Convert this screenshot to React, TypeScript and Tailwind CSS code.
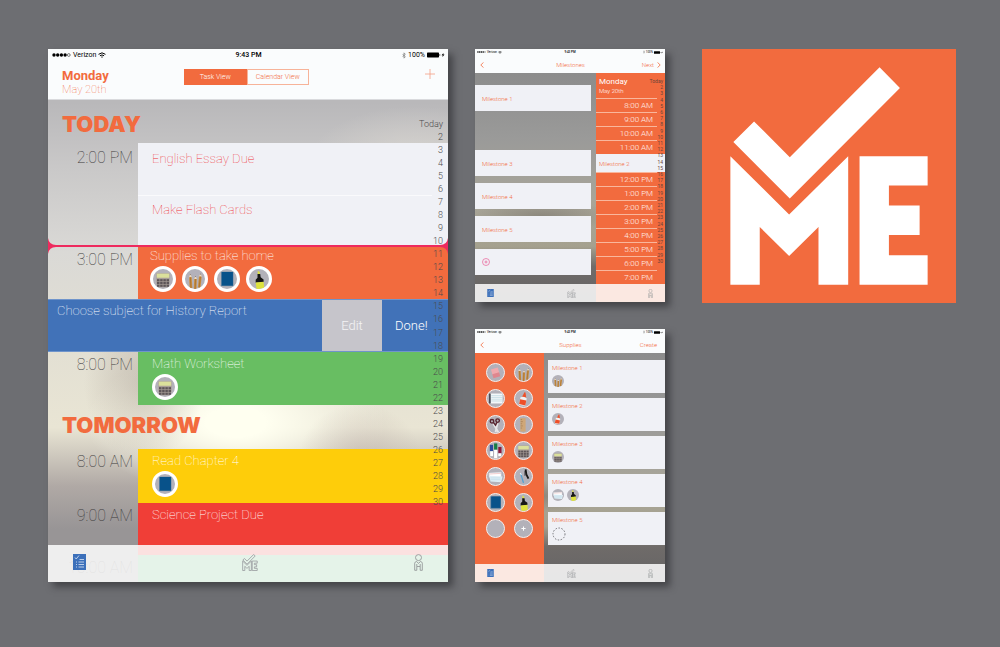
import React from "react";

type SupplyKind =
  | "calculator" | "pencils" | "book" | "highlighter" | "eraser" | "paper" | "glue"
  | "scissors" | "ruler" | "markers" | "cards" | "pens" | "blank" | "add";

const CHECK = "M156 217L263 324L532 55L593 117L263 448L94 279Z";
const MARK_LEFT = "M85 321L261 496L438 321V706H349V533L261 620L173 533V706H85Z";
const MARK_RIGHT = "M472 321H676V409H560V469H652V557H560V618H676V706H472Z";

function Logo() {
  return (
    <svg viewBox="0 0 761 761" className="block w-full bg-[#f26b3e]" role="img" aria-label="Check ME logo">
      <g fill="#fff">
        <path d={CHECK} />
        <path d={MARK_LEFT} />
        <path d={MARK_RIGHT} />
      </g>
    </svg>
  );
}

function SupplyArt({ kind }: { kind: SupplyKind }) {
  switch (kind) {
    case "calculator":
      return (
        <g>
          <path d="M4 5h16v13l-3 4H7l-3-4z" fill="#a99f98" />
          <rect x="4.500" y="5.500" width="15" height="5" fill="#dbe09b" />
          {[12.2, 15.5, 18.8].map((y) =>
            [4.8, 8.6, 12.4, 16.2].map((x) => (
              <rect key={`${x}-${y}`} x={x} y={y} width="3" height="2.600" fill="#5d5558" />
            )),
          )}
        </g>
      );
    case "pencils":
      return (
        <g>
          {[[5, 6, -3], [11, 8, 2], [16.5, 5, 6]].map(([x, y, r]) => (
            <g key={x} transform={`rotate(${r} ${x} 12)`}>
              <path d={`M${x} ${y + 4}l1.6 -4l1.6 4z`} fill="#f1d9b8" />
              <path d={`M${x + 1.1} ${y + 1.4}l.5 -1.4l.5 1.4z`} fill="#4a4038" />
              <rect x={x} y={y + 4} width="3.2" height="13" fill="#c98f43" />
              <rect x={x + 1.1} y={y + 4} width="1" height="13" fill="#a97432" />
            </g>
          ))}
        </g>
      );
    case "book":
      return (
        <g>
          <rect x="5" y="3.500" width="14.500" height="17" fill="#3a6f96" />
          <rect x="6" y="3.500" width="13" height="16" fill="#08528a" />
        </g>
      );
    case "highlighter":
      return (
        <g>
          <path d="M10.5 2l2.5 1.5v3h-2.500z" fill="#dde23e" />
          <path d="M10.200 6h3.300l.5 4l3.500 2.500v3l-9.500 1v-3.500l2.200-2.500z" fill="#161616" />
          <path d="M8 16.200l9.500-1l.8 8.500l-9.300.5z" fill="#dde23e" />
        </g>
      );
    case "eraser":
      return (
        <g transform="rotate(-16 12 12)">
          <rect x="7" y="6" width="10" height="8" fill="#f0a9ad" />
          <rect x="7" y="13" width="10" height="6" fill="#df868e" />
        </g>
      );
    case "paper":
      return (
        <g>
          <rect x="4" y="5" width="18" height="14" fill="#f4f8fa" />
          <path d="M6 8h16M6 10.500h16M6 13h16M6 15.500h16" stroke="#abcbd8" strokeWidth=".8" />
          <rect x="3" y="5" width="2.200" height="14" fill="#3b3f48" />
        </g>
      );
    case "glue":
      return (
        <g transform="rotate(12 12 12)">
          <path d="M11.500 3h1.500l2.500 7h-6z" fill="#ee4f28" />
          <path d="M7.500 11q5-3 9 0v11h-9z" fill="#f3f1f1" />
          <path d="M7.500 14h9v7h-9z" fill="#ee4f28" />
        </g>
      );
    case "scissors":
      return (
        <g>
          <path d="M9 11l7 12M15 10l-3 13" stroke="#e7e6e8" strokeWidth="2.600" />
          <circle cx="7" cy="7.500" r="2.500" fill="none" stroke="#59242f" strokeWidth="2" />
          <circle cx="15" cy="6.500" r="2.500" fill="none" stroke="#59242f" strokeWidth="2" />
          <path d="M9 9l3 4l2-4" fill="none" stroke="#59242f" strokeWidth="2" />
        </g>
      );
    case "ruler":
      return (
        <g>
          <rect x="7.500" y="3" width="7.500" height="19" fill="#cfa778" />
          <path d="M8 5h2M8 8h3M8 11h2M8 14h3M8 17h2" stroke="#8e6a42" strokeWidth=".7" />
        </g>
      );
    case "markers":
      return (
        <g>
          <rect x="4" y="4" width="4.500" height="9" fill="#2a4a9f" />
          <rect x="4.500" y="13" width="4" height="7" fill="#fff" />
          <rect x="10" y="2" width="4.500" height="9" fill="#167d45" />
          <rect x="10" y="11" width="4.500" height="12" fill="#fff" />
          <rect x="16" y="7" width="4.500" height="9" fill="#8d1739" />
          <rect x="16" y="16" width="4" height="4" fill="#fff" />
        </g>
      );
    case "cards":
      return (
        <g>
          <path d="M3 7l17-1v7H3z" fill="#fff" stroke="#cfd8df" strokeWidth=".6" />
          <path d="M3 11l19 1l-2 8l-15-1z" fill="#ddeef6" />
          <path d="M5 14h14M5 16.500h14" stroke="#b4d3e3" strokeWidth=".7" />
          <path d="M4 8.500l16-1" stroke="#e28c8c" strokeWidth=".6" />
        </g>
      );
    case "pens":
      return (
        <g>
          <path d="M8 8l4 13" stroke="#4e9fd2" strokeWidth="1.800" />
          <path d="M7.500 7l1.500 3" stroke="#e8f2f8" strokeWidth="1.600" />
          <path d="M15 2l1 7l3 6" fill="none" stroke="#191919" strokeWidth="2.600" />
          <path d="M14 4v7" stroke="#191919" strokeWidth="1" />
        </g>
      );
    case "add":
      return <path d="M12 9v6M9 12h6" stroke="#fff" strokeWidth="1.500" />;
    default:
      return null;
  }
}

function Supply({ kind, className }: { kind: SupplyKind; className: string }) {
  return (
    <span className={`block shrink-0 overflow-hidden rounded-full bg-[#b3b1b9] ${className}`}>
      <svg viewBox="0 0 24 24" className="block size-full" aria-hidden="true">
        <SupplyArt kind={kind} />
      </svg>
    </span>
  );
}

function StatusBar({ small = false }: { small?: boolean }) {
  return (
    <div className={`grid grid-cols-3 items-center font-medium text-black ${small ? "h-[6px] px-[2px] text-[3px] leading-[4px]" : "h-3 pl-1 pr-[3px] text-[7px] leading-[8px]"}`}>
      <div className={`flex items-center ${small ? "gap-[1px]" : "gap-[2px]"}`}>
        <svg viewBox="0 0 19 4" className={small ? "h-[2px] w-[9px]" : "h-1 w-[19px]"} aria-hidden="true">
          {[2, 5.7, 9.400, 13.100].map((x) => <circle key={x} cx={x} cy="2" r="1.700" />)}
          <circle cx="16.800" cy="2" r="1.400" fill="none" stroke="#000" strokeWidth=".5" />
        </svg>
        <span className="font-normal">Verizon</span>
        <svg viewBox="0 0 12 9" className={small ? "h-[3px] w-1" : "h-[6px] w-2"} fill="none" stroke="#000" strokeWidth="1.500" aria-hidden="true">
          <path d="M.8 3.500Q6-1 11.200 3.500M2.900 5.700Q6 3 9.100 5.700M5 7.700L6 7l1 .7" />
        </svg>
      </div>
      <span className="text-center">9:43 PM</span>
      <div className={`flex items-center justify-end ${small ? "gap-[1px]" : "gap-[2px]"}`}>
        <svg viewBox="0 0 6 10" className={small ? "h-1 w-[2px]" : "h-[7px] w-1"} fill="none" stroke="#666" strokeWidth=".9" aria-hidden="true">
          <path d="M1 3l4 4l-2 2V1l2 2l-4 4" />
        </svg>
        <span className="font-normal">100%</span>
        <svg viewBox="0 0 18 6" className={small ? "h-[3px] w-[9px]" : "h-[6px] w-[18px]"} aria-hidden="true">
          <rect x="0" y=".5" width="12" height="5" rx=".7" />
          <path d="M12.500 2v2l1-1zM16.500 1l-2 2.300h1.200L15.500 5l2-2.400h-1.200z" />
        </svg>
      </div>
    </div>
  );
}

function TabBar({ small = false }: { small?: boolean }) {
  return (
    <nav
      aria-label="Main"
      className={`absolute inset-x-0 bottom-0 flex items-center justify-between bg-[#fdfdfd]/86 ${small ? "h-[18px] px-3" : "h-[37px] px-[25px] pb-[3px]"}`}
    >
      <a href="#tasks" aria-label="Tasks">
        <svg viewBox="0 0 13 16" className={small ? "h-2 w-[7px]" : "h-4 w-[13px]"} aria-hidden="true">
          <rect width="13" height="16" fill="#3c70ba" />
          <path d="M2 3.500l1.200 1.500l2.800-3.500M6.500 5.500h4.500M3 8h1M5.500 8h5.500M3 10.500h1M5.500 10.500h5.500M3 13h1M5.500 13h5.500" fill="none" stroke="#dce6f5" strokeWidth=".8" />
        </svg>
      </a>
      <a href="#home" aria-label="Home">
        <svg viewBox="70 35 626 690" className={small ? "h-[9px] w-[9px]" : "h-[17px] w-4"} fill="none" stroke="#9a9da0" strokeWidth="34" aria-hidden="true">
          <path d={CHECK} />
          <path d={MARK_LEFT} />
          <path d={MARK_RIGHT} />
        </svg>
      </a>
      <a href="#profile" aria-label="Profile">
        <svg viewBox="0 0 9 17" className={small ? "h-[9px] w-[5px]" : "h-[17px] w-[9px]"} fill="none" stroke="#95989a" strokeWidth=".9" aria-hidden="true">
          <circle cx="4.500" cy="3.600" r="3" />
          <path d="M.7 16.300V9.200Q1 7.500 2.700 7.500L4.500 9.500L6.300 7.500Q8 7.500 8.300 9.200V16.300H6.200V12.500H2.800V16.300ZM2.800 12.500V10M6.200 12.500V10" />
        </svg>
      </a>
    </nav>
  );
}

function DayIndex({ className }: { className: string }) {
  return (
    <ol className={`pointer-events-none absolute flex flex-col justify-between text-right ${className}`}>
      <li>Today</li>
      {Array.from({ length: 29 }, (_, i) => <li key={i}>{i + 2}</li>)}
    </ol>
  );
}

const tile = "flex flex-col items-start gap-[2px] text-[13px] leading-4";
const slot = "pr-[5px] text-right text-[16px] leading-5 text-[#3d3b3c] font-thin";

function TaskRow({ time, title, height, color, supplies = [], inset = "pl-[14px] pt-1" }: {
  time: string; title: string; height: string; color: string; supplies?: SupplyKind[]; inset?: string;
}) {
  return (
    <li className={`grid grid-cols-[90px_1fr] ${height}`}>
      <time className={`${slot} pt-[3px]`}>{time}</time>
      <div className={`${tile} ${inset} text-white ${color}`}>
        <span>{title}</span>
        {supplies.length > 0 && (
          <div className="flex gap-[6px]">
            {supplies.map((kind) => (
              <Supply key={kind} kind={kind} className="size-[26px] border-[3px] border-white" />
            ))}
          </div>
        )}
      </div>
    </li>
  );
}

const heading = "pl-[14px] font-[Inter] text-[22px] leading-6 font-black text-[#f26b3e]";
const shell = "relative overflow-hidden";
const shadow = "shadow-[5px_5px_7px_rgba(35,35,38,0.55)]";

function Flare({ className }: { className: string }) {
  return (
    <svg viewBox="0 0 8 16" className={`absolute -top-[7px] h-4 w-2 ${className}`} fill="#ee2a5e" aria-hidden="true">
      <path d="M0 0Q1 7 8 7V9Q1 9 0 16Z" />
    </svg>
  );
}

function TaskBoard() {
  return (
    <section className={shadow}>
      <div className={`${shell} bg-[radial-gradient(ellipse_110px_60px_at_92%_22%,#d8d5d0_0%,transparent_100%),radial-gradient(ellipse_60px_75px_at_24%_63%,#a69b9077_0%,transparent_100%),radial-gradient(ellipse_60px_50px_at_78%_76%,#c5b9b099_0%,transparent_100%),radial-gradient(ellipse_150px_75px_at_47%_70%,#fffff0_20%,#fffff000_100%),linear-gradient(180deg,#b9b8ba_10%,#c9c8c8_22%,#dad9d6_38%,#e2dfd3_55%,#e9e5d4_71%,#b0a9a5_82%,#989596_90%,#989596_100%)]`}>
        <header className="bg-[#fafcfd]">
          <StatusBar />
          <div className="grid h-[39px] grid-cols-[122fr_125fr_126fr] items-start border-b border-[#d9dadd] pl-[14px] pr-[13px] pt-2">
            <div className="text-[#f26b3e]">
              <h1 className="text-[13px] leading-[14px] font-bold">Monday</h1>
              <p className="text-[11px] leading-[13px]">May 20th</p>
            </div>
            <div className="grid grid-cols-2 text-[7px] leading-[14px] font-light">
              <button className="border border-[#f26b3e] bg-[#f26b3e] text-white">Task View</button>
              <button className="border border-[#f7b399] text-[#f26b3e]">Calendar View</button>
            </div>
            <button aria-label="Add task" className="justify-self-end">
              <svg viewBox="0 0 10 10" className="size-[10px]" stroke="#f4a084" strokeWidth=".8" aria-hidden="true">
                <path d="M5 0v10M0 5h10" />
              </svg>
            </button>
          </div>
        </header>

        <h2 className={`${heading} h-[43px] pt-3`}>TODAY</h2>
        <ul>
          <li className="grid grid-cols-[90px_1fr]">
            <time className={`${slot} pt-[5px]`}>2:00 PM</time>
            <div className="bg-[#f0f1f6] text-[#ee3338]">
              <div className={`${tile} h-[52px] pl-[14px] pt-2`}>English Essay Due</div>
              <div className="mr-4 border-t border-[#fafafc]" />
              <div className={`${tile} h-[49px] pl-[14px] pt-[6px]`}>Make Flash Cards</div>
            </div>
          </li>
        </ul>
        <div className="relative h-[2px] bg-[#ee2a5e]">
          <Flare className="left-0" />
          <Flare className="right-0 -scale-x-100" />
        </div>
        <ul>
          <TaskRow time="3:00 PM" title="Supplies to take home" height="h-[52px]" color="bg-[#f26b3e]" inset="pl-3 pt-px" supplies={["calculator", "pencils", "book", "highlighter"]} />
          <li className="flex h-[53px] border-y border-[#6f94cb] bg-[#4172b8] text-[13px] leading-4 text-white">
            <span className="flex-1 pl-[9px] pt-[3px]">Choose subject for History Report</span>
            <button className="w-[60px] bg-[#c6c5cb] font-light text-white/80">Edit</button>
            <button className="w-[66px] pl-[13px] text-left font-light text-white">Done!</button>
          </li>
          <TaskRow time="8:00 PM" title="Math Worksheet" height="h-[53px]" color="bg-[#68be62]" supplies={["calculator"]} />
        </ul>
        <h2 className={`${heading} h-11 pt-2`}>TOMORROW</h2>
        <ul>
          <TaskRow time="8:00 AM" title="Read Chapter 4" height="h-[54px]" color="bg-[#fecd0a]" supplies={["book"]} />
          <TaskRow time="9:00 AM" title="Science Project Due" height="h-[52px]" color="bg-[#f03e37]" />
          <TaskRow time="10:00 AM" title="" height="h-[27px]" color="bg-[#54b673]" />
        </ul>

        <DayIndex className="right-[5px] top-[69px] h-[391px] text-[9px] leading-[13px] font-light text-[#4b4a4c]" />
        <TabBar />
      </div>
    </section>
  );
}

const smallBackdrop =
  "bg-[radial-gradient(ellipse_70px_16px_at_35%_66%,#75706888_0%,transparent_100%),linear-gradient(180deg,#8b8b8b_8%,#9a9a99_35%,#a8a599_60%,#a5a18f_78%,#6f6b69_86%,#656465_100%)]";

function SmallHeader({ title, action, next = false }: { title: string; action: string; next?: boolean }) {
  return (
    <header className="bg-[#fafcfd]">
      <StatusBar small />
      <div className="grid h-[18px] grid-cols-3 items-center pl-[5px] pr-1 pt-px text-[6px] leading-[7px] font-light text-[#f26b3e]">
        <button aria-label="Back" className="justify-self-start">
          <svg viewBox="0 0 4 6" className="h-[6px] w-1" fill="none" stroke="#f26b3e" strokeWidth=".8" aria-hidden="true"><path d="M3.500 .4L.8 3l2.700 2.600" /></svg>
        </button>
        <h2 className="text-center">{title}</h2>
        <button className="flex items-center gap-[3px] justify-self-end">
          {action}
          {next ? (
            <svg viewBox="0 0 4 6" className="h-[6px] w-1" fill="none" stroke="#f26b3e" strokeWidth=".8" aria-hidden="true"><path d="M.5 .4L3.200 3L.5 5.600" /></svg>
          ) : <span className="w-px" />}
        </button>
      </div>
    </header>
  );
}

const card = "flex h-[26px] items-center bg-[#f0f1f6] pl-[7px] text-[#f26b3e] font-light";
const hour = "h-[14px] border-t border-[#f9b69c] pr-[4px] text-right text-[8px] leading-[13px] font-light text-white/90";

function MilestoneBoard() {
  return (
    <section className={shadow}>
      <div className={`${shell} ${smallBackdrop}`}>
        <SmallHeader title="Milestones" action="Next" next />
        <div className="grid h-[229px] grid-cols-[116fr_69fr] gap-[5px] text-[6px] leading-[7px]">
          <div className="flex flex-col gap-[7px] pt-3">
            <div className={card}>Milestone 1</div>
            <div className="h-[25px]" />
            <div className={card}>Milestone 3</div>
            <div className={card}>Milestone 4</div>
            <div className={card}>Milestone 5</div>
            <div className={card}>
              <button aria-label="Add milestone">
                <svg viewBox="0 0 8 8" className="size-2" fill="none" stroke="#ea6098" strokeWidth=".7" aria-hidden="true">
                  <circle cx="4" cy="4" r="3.500" /><path d="M4 2.500v3M2.500 4h3" />
                </svg>
              </button>
            </div>
          </div>
          <div className="relative bg-[#f26b3e] text-white">
            <div className="h-[25px] pl-[3px] pt-1">
              <h3 className="text-[8px] leading-[9px] font-normal">Monday</h3>
              <p className="text-[6px] leading-[9px] font-light">May 20th</p>
            </div>
            <ul className="pr-2">
              {["8:00 AM", "9:00 AM", "10:00 AM", "11:00 AM"].map((t) => <li key={t} className={hour}>{t}</li>)}
            </ul>
            <div className="flex h-[18px] items-center bg-[#f0f1f6] pl-[3px] font-light text-[#f26b3e]">Milestone 2</div>
            <ul className="pr-2">
              {["12:00 PM", "1:00 PM", "2:00 PM", "3:00 PM", "4:00 PM", "5:00 PM", "6:00 PM", "7:00 PM"].map((t) => <li key={t} className={hour}>{t}</li>)}
            </ul>
            <DayIndex className="right-[2px] top-[5px] h-[186px] text-[5px] leading-[6px] font-normal text-[#6b4238]" />
          </div>
        </div>
        <TabBar small />
      </div>
    </section>
  );
}

const supplyGrid: SupplyKind[] = [
  "eraser", "pencils", "paper", "glue", "scissors", "ruler", "markers",
  "calculator", "cards", "pens", "book", "highlighter", "blank", "add",
];

const milestoneSupplies: { title: string; items: SupplyKind[] }[] = [
  { title: "Milestone 1", items: ["pencils"] },
  { title: "Milestone 2", items: ["glue"] },
  { title: "Milestone 3", items: ["calculator"] },
  { title: "Milestone 4", items: ["cards", "highlighter"] },
  { title: "Milestone 5", items: [] },
];

function SuppliesBoard() {
  return (
    <section className={shadow}>
      <div className={`${shell} ${smallBackdrop}`}>
        <SmallHeader title="Supplies" action="Create" />
        <div className="grid h-[229px] grid-cols-[69fr_117fr] gap-1">
          <div className="grid h-full grid-cols-[auto_auto] content-start justify-center gap-x-[9px] gap-y-[7px] bg-[#f26b3e] pt-[10px]">
            {supplyGrid.map((kind) => (
              <button key={kind} aria-label={kind}>
                <Supply kind={kind} className="size-[19px] border border-[#f3eeee]" />
              </button>
            ))}
          </div>
          <ul className="flex flex-col gap-[5px] pt-[7px]">
            {milestoneSupplies.map(({ title, items }) => (
              <li key={title} className="flex h-[33px] flex-col gap-1 bg-[#f0f1f6] pl-1 pt-1 text-[6px] leading-[7px] font-light text-[#f26b3e]">
                {title}
                <div className="flex gap-[3px]">
                  {items.map((kind) => <Supply key={kind} kind={kind} className="size-3" />)}
                  {items.length === 0 && (
                    <svg viewBox="0 0 14 14" className="size-[14px]" fill="none" stroke="#67676b" strokeWidth=".9" strokeDasharray="1.500 1.500" aria-hidden="true">
                      <circle cx="7" cy="7" r="6" />
                    </svg>
                  )}
                </div>
              </li>
            ))}
          </ul>
        </div>
        <TabBar small />
      </div>
    </section>
  );
}

export default function App() {
  return (
    <main className="grid min-h-screen grid-cols-[400fr_190fr_264fr] items-start gap-x-[27px] bg-[#6d6e72] pl-12 pr-11 pt-[49px] font-[Roboto,sans-serif] font-thin">
      <TaskBoard />
      <div className="flex flex-col gap-[27px]">
        <MilestoneBoard />
        <SuppliesBoard />
      </div>
      <div className="pl-[10px]">
        <Logo />
      </div>
    </main>
  );
}
